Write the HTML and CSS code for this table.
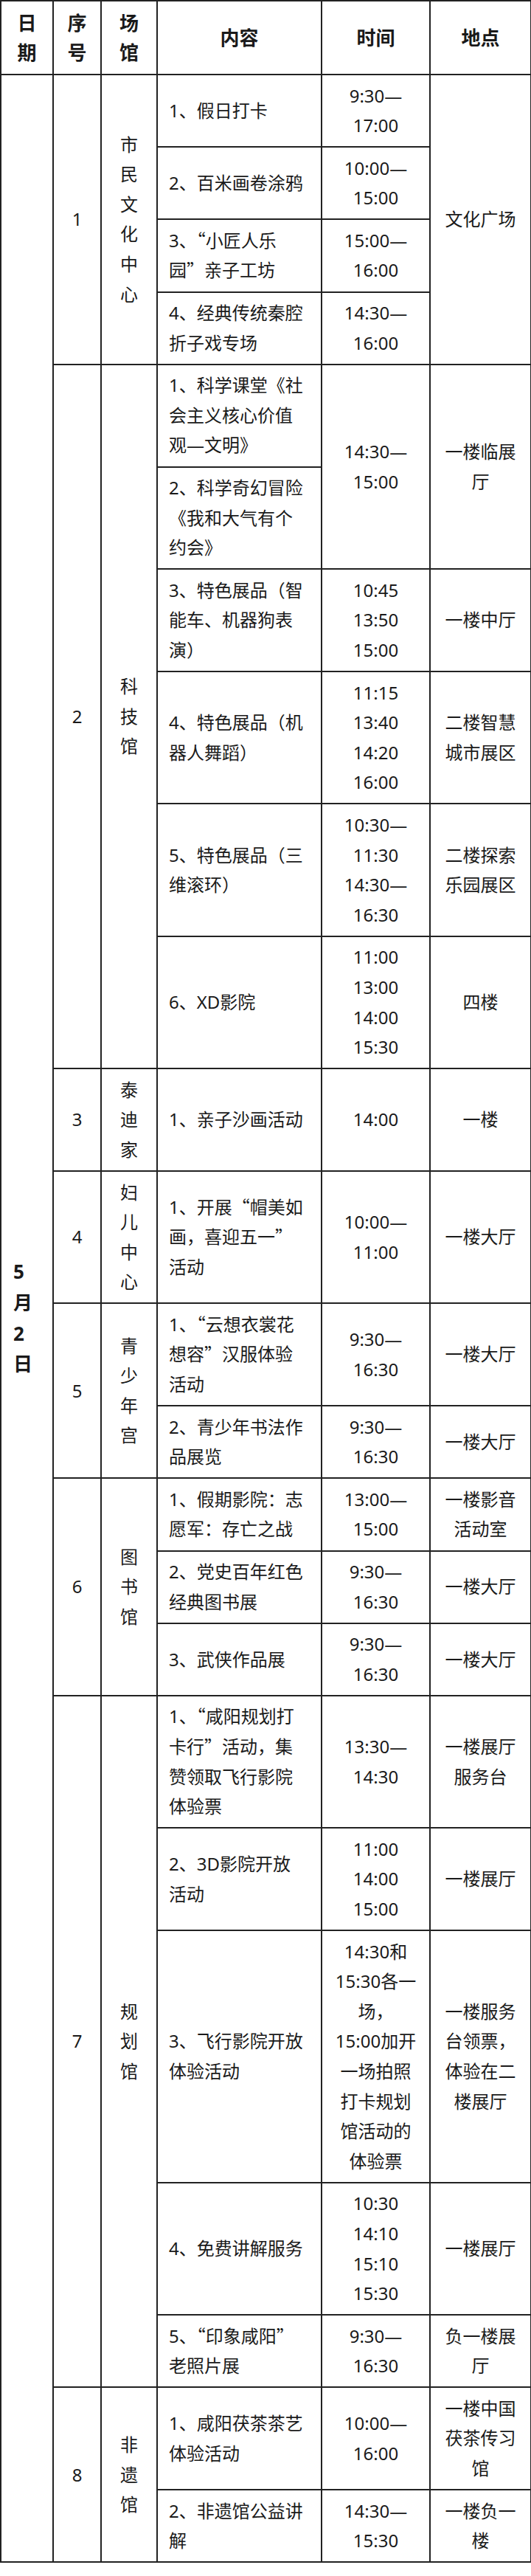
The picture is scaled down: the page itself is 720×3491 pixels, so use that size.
FILE: index.html
```html
<!DOCTYPE html>
<html lang="zh-CN">
<head>
<meta charset="utf-8">
<title>5月2日活动安排</title>
<link rel="stylesheet" href="styles.css">
</head>
<body>
<table class="schedule">
  <colgroup>
    <col class="c-date">
    <col class="c-no">
    <col class="c-venue">
    <col class="c-item">
    <col class="c-time">
    <col class="c-place">
  </colgroup>
  <thead>
    <tr>
      <th>日<br>期</th>
      <th>序<br>号</th>
      <th>场<br>馆</th>
      <th>内容</th>
      <th>时间</th>
      <th>地点</th>
    </tr>
  </thead>
  <tbody>
    <tr>
      <td class="date" rowspan="24">5<br>月<br>2<br>日</td>
      <td rowspan="4">1</td>
      <td rowspan="4">市<br>民<br>文<br>化<br>中<br>心</td>
      <td class="item">1、假日打卡</td>
      <td>9:30—<br>17:00</td>
      <td rowspan="4">文化广场</td>
    </tr>
    <tr>
      <td class="item">2、百米画卷涂鸦</td>
      <td>10:00—<br>15:00</td>
    </tr>
    <tr>
      <td class="item">3、<span class="q">“</span>小匠人乐<br>园<span class="q">”</span>亲子工坊</td>
      <td>15:00—<br>16:00</td>
    </tr>
    <tr>
      <td class="item">4、经典传统秦腔<br>折子戏专场</td>
      <td>14:30—<br>16:00</td>
    </tr>

    <tr>
      <td rowspan="6">2</td>
      <td rowspan="6">科<br>技<br>馆</td>
      <td class="item">1、科学课堂《社<br>会主义核心价值<br>观—文明》</td>
      <td rowspan="2">14:30—<br>15:00</td>
      <td rowspan="2">一楼临展<br>厅</td>
    </tr>
    <tr>
      <td class="item">2、科学奇幻冒险<br>《我和大气有个<br>约会》</td>
    </tr>
    <tr>
      <td class="item">3、特色展品（智<br>能车、机器狗表<br>演）</td>
      <td>10:45<br>13:50<br>15:00</td>
      <td>一楼中厅</td>
    </tr>
    <tr>
      <td class="item">4、特色展品（机<br>器人舞蹈）</td>
      <td>11:15<br>13:40<br>14:20<br>16:00</td>
      <td>二楼智慧<br>城市展区</td>
    </tr>
    <tr>
      <td class="item">5、特色展品（三<br>维滚环）</td>
      <td>10:30—<br>11:30<br>14:30—<br>16:30</td>
      <td>二楼探索<br>乐园展区</td>
    </tr>
    <tr>
      <td class="item">6、XD影院</td>
      <td>11:00<br>13:00<br>14:00<br>15:30</td>
      <td>四楼</td>
    </tr>

    <tr>
      <td>3</td>
      <td>泰<br>迪<br>家</td>
      <td class="item">1、亲子沙画活动</td>
      <td>14:00</td>
      <td>一楼</td>
    </tr>

    <tr>
      <td>4</td>
      <td>妇<br>儿<br>中<br>心</td>
      <td class="item">1、开展<span class="q">“</span>帽美如<br>画，喜迎五一<span class="q">”</span><br>活动</td>
      <td>10:00—<br>11:00</td>
      <td>一楼大厅</td>
    </tr>

    <tr>
      <td rowspan="2">5</td>
      <td rowspan="2">青<br>少<br>年<br>宫</td>
      <td class="item">1、<span class="q">“</span>云想衣裳花<br>想容<span class="q">”</span>汉服体验<br>活动</td>
      <td>9:30—<br>16:30</td>
      <td>一楼大厅</td>
    </tr>
    <tr>
      <td class="item">2、青少年书法作<br>品展览</td>
      <td>9:30—<br>16:30</td>
      <td>一楼大厅</td>
    </tr>

    <tr>
      <td rowspan="3">6</td>
      <td rowspan="3">图<br>书<br>馆</td>
      <td class="item">1、假期影院：志<br>愿军：存亡之战</td>
      <td>13:00—<br>15:00</td>
      <td>一楼影音<br>活动室</td>
    </tr>
    <tr>
      <td class="item">2、党史百年红色<br>经典图书展</td>
      <td>9:30—<br>16:30</td>
      <td>一楼大厅</td>
    </tr>
    <tr>
      <td class="item">3、武侠作品展</td>
      <td>9:30—<br>16:30</td>
      <td>一楼大厅</td>
    </tr>

    <tr>
      <td rowspan="5">7</td>
      <td rowspan="5">规<br>划<br>馆</td>
      <td class="item">1、<span class="q">“</span>咸阳规划打<br>卡行<span class="q">”</span>活动，集<br>赞领取飞行影院<br>体验票</td>
      <td>13:30—<br>14:30</td>
      <td>一楼展厅<br>服务台</td>
    </tr>
    <tr>
      <td class="item">2、3D影院开放<br>活动</td>
      <td>11:00<br>14:00<br>15:00</td>
      <td>一楼展厅</td>
    </tr>
    <tr>
      <td class="item">3、飞行影院开放<br>体验活动</td>
      <td>14:30和<br>15:30各一<br>场，<br>15:00加开<br>一场拍照<br>打卡规划<br>馆活动的<br>体验票</td>
      <td>一楼服务<br>台领票，<br>体验在二<br>楼展厅</td>
    </tr>
    <tr>
      <td class="item">4、免费讲解服务</td>
      <td>10:30<br>14:10<br>15:10<br>15:30</td>
      <td>一楼展厅</td>
    </tr>
    <tr>
      <td class="item">5、<span class="q">“</span>印象咸阳<span class="q">”</span><br>老照片展</td>
      <td>9:30—<br>16:30</td>
      <td>负一楼展<br>厅</td>
    </tr>

    <tr>
      <td rowspan="2">8</td>
      <td rowspan="2">非<br>遗<br>馆</td>
      <td class="item">1、咸阳茯茶茶艺<br>体验活动</td>
      <td>10:00—<br>16:00</td>
      <td>一楼中国<br>茯茶传习<br>馆</td>
    </tr>
    <tr>
      <td class="item">2、非遗馆公益讲<br>解</td>
      <td>14:30—<br>15:30</td>
      <td>一楼负一<br>楼</td>
    </tr>
  </tbody>
</table>
</body>
</html>
```

FILE: styles.css
```css
html, body {
  margin: 0;
  padding: 0;
  background: #fff;
}

body {
  font-family: "Noto Sans", "Noto Sans CJK SC", sans-serif;
  font-size: 24px;
  color: #1a1a1a;
}

.schedule {
  border-collapse: collapse;
  table-layout: fixed;
  width: 719px;
}

.c-date { width: 71px; }
.c-no { width: 65px; }
.c-venue { width: 76px; }
.c-item { width: 223px; }
.c-time { width: 147px; }
.c-place { width: 137px; }

.schedule th,
.schedule td {
  border: 2px solid #222;
  padding: 7.5px 6px;
  line-height: 40.6px;
  white-space: nowrap;
  vertical-align: middle;
  text-align: center;
  font-weight: 400;
}

.schedule th {
  font-weight: 700;
  font-size: 26px;
  line-height: 40px;
  padding: 9px 4px;
}

.schedule td.item {
  text-align: left;
  padding-left: 15px;
}

.schedule td.date {
  text-align: left;
  font-weight: 700;
  font-size: 26px;
  line-height: 41.6px;
  padding-left: 16px;
}

.q {
  font-family: "Noto Sans CJK SC", sans-serif;
  line-height: 0;
}
```
